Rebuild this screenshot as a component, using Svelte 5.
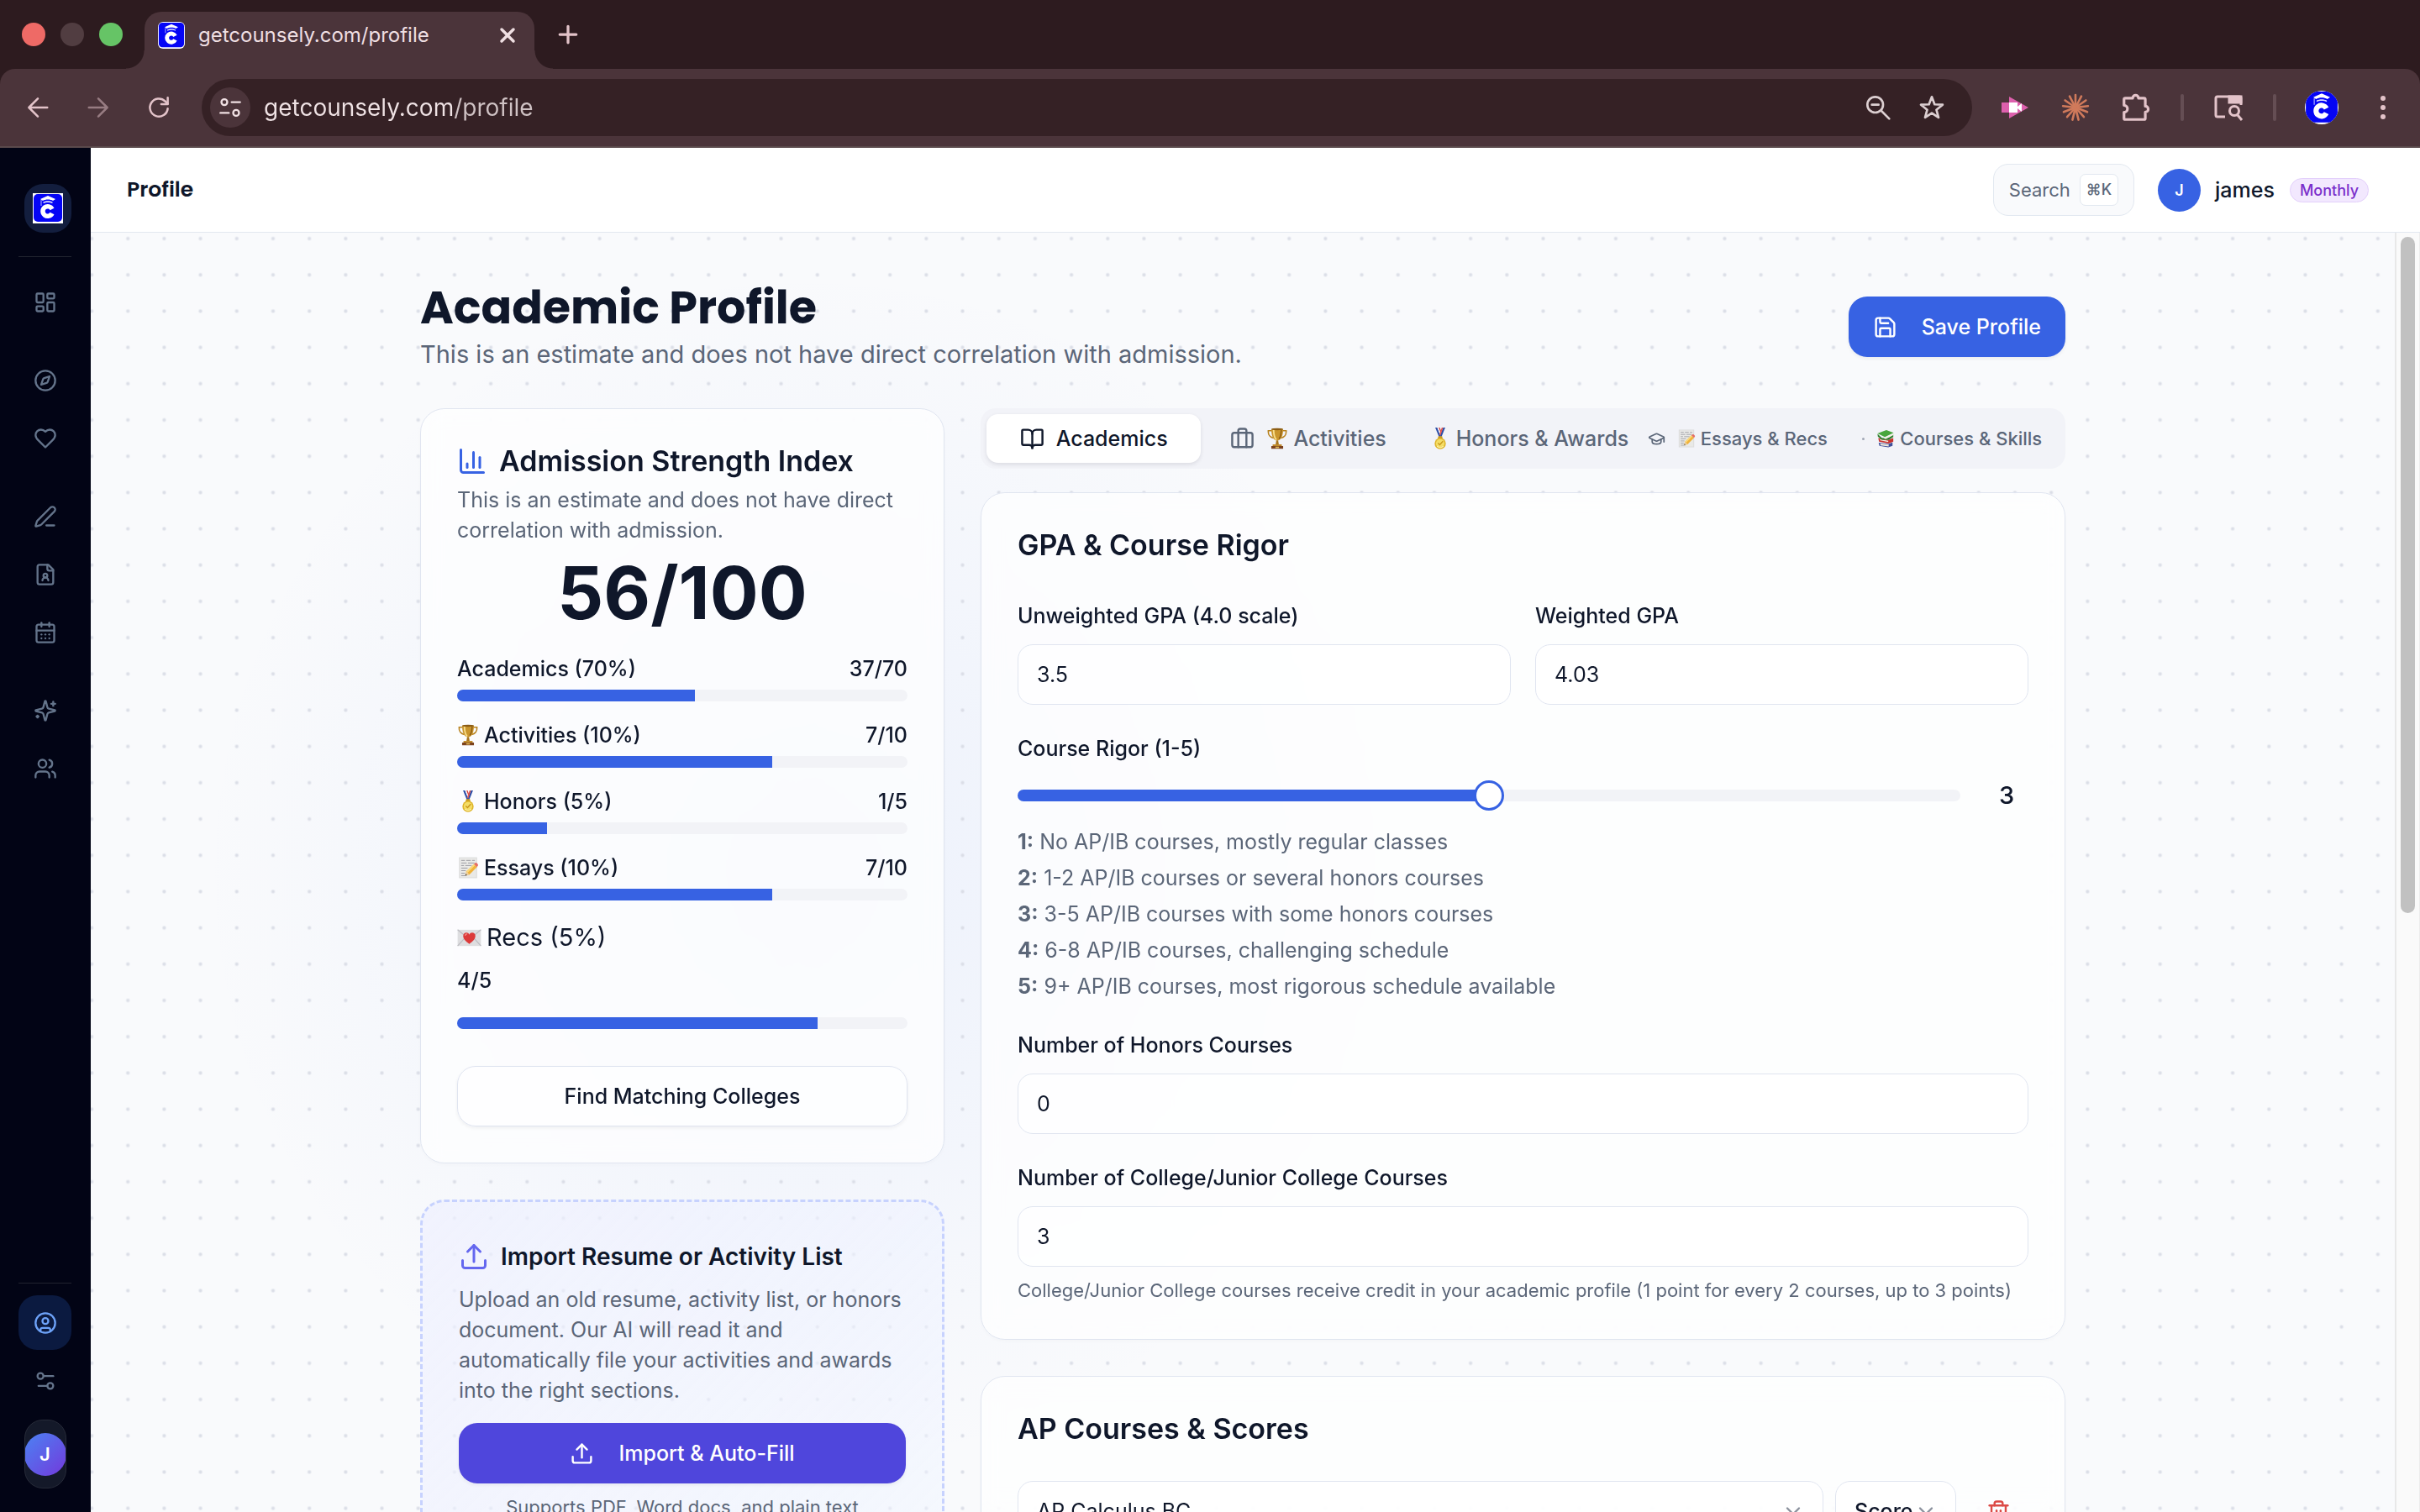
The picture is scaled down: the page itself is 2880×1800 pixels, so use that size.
<script lang="ts">
  let url = $state('getcounsely.com/profile');
  let unweighted = $state('3.5');
  let weighted = $state('4.03');
  let rigor = $state(3);
  let honorsCourses = $state('0');
  let collegeCourses = $state('3');
  let activeTab = $state('academics');

  const rigorFill = $derived(((rigor - 1) / 4) * 100);

  // stroke icons on a 24px grid
  const icons: Record<string, string> = {
    dashboard:
      '<rect width="7" height="9" x="3" y="3" rx="1"/><rect width="7" height="5" x="14" y="3" rx="1"/><rect width="7" height="9" x="14" y="12" rx="1"/><rect width="7" height="5" x="3" y="16" rx="1"/>',
    compass:
      '<circle cx="12" cy="12" r="10"/><path d="m16.24 7.76-1.804 5.411a2 2 0 0 1-1.265 1.265L7.76 16.24l1.804-5.411a2 2 0 0 1 1.265-1.265z"/>',
    heart:
      '<path d="M19 14c1.49-1.46 3-3.21 3-5.5A5.5 5.5 0 0 0 16.5 3c-1.76 0-3 .5-4.5 2-1.5-1.5-2.74-2-4.5-2A5.5 5.5 0 0 0 2 8.5c0 2.3 1.5 4.05 3 5.5l7 7Z"/>',
    pen: '<path d="M13 21h8"/><path d="M21.174 6.812a1 1 0 0 0-3.986-3.987L3.842 16.174a2 2 0 0 0-.5.83l-1.321 4.352a.5.5 0 0 0 .623.622l4.353-1.32a2 2 0 0 0 .83-.497z"/>',
    fileUser:
      '<path d="M14 2v4a2 2 0 0 0 2 2h4"/><path d="M15 18a3 3 0 1 0-6 0"/><path d="M15 2H6a2 2 0 0 0-2 2v16a2 2 0 0 0 2 2h12a2 2 0 0 0 2-2V7z"/><circle cx="12" cy="13" r="2"/>',
    calendar:
      '<path d="M8 2v4"/><path d="M16 2v4"/><rect width="18" height="18" x="3" y="4" rx="2"/><path d="M3 10h18"/><path d="M8 14h.01"/><path d="M12 14h.01"/><path d="M16 14h.01"/><path d="M8 18h.01"/><path d="M12 18h.01"/><path d="M16 18h.01"/>',
    sparkles:
      '<path d="M9.937 15.5A2 2 0 0 0 8.5 14.063l-6.135-1.582a.5.5 0 0 1 0-.962L8.5 9.936A2 2 0 0 0 9.937 8.5l1.582-6.135a.5.5 0 0 1 .963 0L14.063 8.5A2 2 0 0 0 15.5 9.937l6.135 1.581a.5.5 0 0 1 0 .964L15.5 14.063a2 2 0 0 0-1.437 1.437l-1.582 6.135a.5.5 0 0 1-.963 0z"/><path d="M20 3v4"/><path d="M22 5h-4"/><path d="M4 17v2"/><path d="M5 18H3"/>',
    users:
      '<path d="M16 21v-2a4 4 0 0 0-4-4H6a4 4 0 0 0-4 4v2"/><circle cx="9" cy="7" r="4"/><path d="M22 21v-2a4 4 0 0 0-3-3.87"/><path d="M16 3.13a4 4 0 0 1 0 7.75"/>',
    userCircle:
      '<circle cx="12" cy="12" r="10"/><circle cx="12" cy="10" r="3"/><path d="M7 20.662V19a2 2 0 0 1 2-2h6a2 2 0 0 1 2 2v1.662"/>',
    settings:
      '<path d="M20 7h-9"/><path d="M14 17H5"/><circle cx="17" cy="17" r="3"/><circle cx="7" cy="7" r="3"/>',
    chart: '<path d="M3 3v16a2 2 0 0 0 2 2h16"/><path d="M18 17V9"/><path d="M13 17V5"/><path d="M8 17v-3"/>',
    upload: '<path d="M12 3v13"/><path d="m17 8-5-5-5 5"/><path d="M21 15v4a2 2 0 0 1-2 2H5a2 2 0 0 1-2-2v-4"/>',
    save: '<path d="M15.2 3a2 2 0 0 1 1.4.6l3.8 3.8a2 2 0 0 1 .6 1.4V19a2 2 0 0 1-2 2H5a2 2 0 0 1-2-2V5a2 2 0 0 1 2-2z"/><path d="M17 21v-7a1 1 0 0 0-1-1H8a1 1 0 0 0-1 1v7"/><path d="M7 3v4a1 1 0 0 0 1 1h7"/>',
    book: '<path d="M12 7v14"/><path d="M3 18a1 1 0 0 1-1-1V4a1 1 0 0 1 1-1h5a4 4 0 0 1 4 4 4 4 0 0 1 4-4h5a1 1 0 0 1 1 1v13a1 1 0 0 1-1 1h-6a3 3 0 0 0-3 3 3 3 0 0 0-3-3z"/>',
    briefcase:
      '<path d="M16 20V4a2 2 0 0 0-2-2h-4a2 2 0 0 0-2 2v16"/><rect width="20" height="14" x="2" y="6" rx="2"/>',
    cap: '<path d="M21.42 10.922a1 1 0 0 0-.019-1.838L12.83 5.18a2 2 0 0 0-1.66 0L2.6 9.08a1 1 0 0 0 0 1.832l8.57 3.908a2 2 0 0 0 1.66 0z"/><path d="M22 10v6"/><path d="M6 12.5V16a6 3 0 0 0 12 0v-3.5"/>',
    chevron: '<path d="m6 9 6 6 6-6"/>',
    trash:
      '<path d="M3 6h18"/><path d="M19 6v14a2 2 0 0 1-2 2H7a2 2 0 0 1-2-2V6"/><path d="M8 6V4a2 2 0 0 1 2-2h4a2 2 0 0 1 2 2v2"/><path d="M10 11v6"/><path d="M14 11v6"/>',
    close: '<path d="m6 6 12 12M18 6 6 18"/>',
    plus: '<path d="M12 3v18M3 12h18"/>',
    back: '<path d="M21 12H4M12 3.500l-8.500 8.500 8.500 8.500"/>',
    forward: '<path d="M3 12h17M12 3.500l8.500 8.500-8.500 8.500"/>',
    reload: '<path d="M20.500 13a8.500 8.500 0 1 1-2.500-7l2.500 2.500"/><path d="M20.500 2.500v6.200h-6.200"/>',
    tune: '<circle cx="6" cy="6.500" r="3"/><path d="M13.500 6.500H22"/><circle cx="18" cy="17.500" r="3"/><path d="M2 17.500h8.500"/>',
    zoomOut: '<circle cx="9.500" cy="9.500" r="7"/><path d="m15 15 7 7M6.500 9.500h6"/>',
    star: '<path d="m12 2.500 2.500 6.700 7.200.3-5.600 4.500 1.900 6.900-6-4-6 4 1.900-6.900L2.300 9.500l7.200-.3z"/>',
    puzzle:
      '<path d="M4 5h5.500a2.200 2.200 0 0 1 4.400 0H18a1 1 0 0 1 1 1v5a2.200 2.200 0 0 1 0 4.400V20a1 1 0 0 1-1 1H4a1 1 0 0 1-1-1v-4.500a2.600 2.600 0 0 0 0-5.200V6a1 1 0 0 1 1-1z"/>'
  };

  // colour pictograms, also on a 24px grid
  const emoji: Record<string, string> = {
    trophy:
      '<path d="M6 3.500H2.200C1.800 8 4.500 10.800 8 11.500M18 3.500h3.800c.4 4.500-2.300 7.300-5.800 8" fill="none" stroke="#b9831f" stroke-width="1.500"/><path d="M5.500 1.500h13c0 7.500-2 11.200-5 12.500h-3c-3-1.300-5-5-5-12.500z" fill="#c9952d"/><path d="M8 2.500c.2 5.500 1.200 9 3 11" fill="none" stroke="#f8df8c" stroke-width="1.700"/><path d="M16.500 2.500c-.2 5-1 8-2.500 10" fill="none" stroke="#8d5c12" stroke-width="1.400"/><ellipse cx="12" cy="1.800" rx="6.500" ry="1.200" fill="#8a5b14"/><path d="M11 14h2l.8 5h-3.600z" fill="#a8741c"/><path d="M7 18.500h10v2H7z" fill="#c08a2a"/><path d="M5.500 20.300h13v3h-13z" fill="#7b421d"/><path d="M10 21h4v1.500h-4z" fill="#e3bd58"/>',
    medal:
      '<path d="M6.500 0h2.300l4 10h-2.300z" fill="#2d4fa8"/><path d="M8.800 0h1.600l3.200 8-1 2z" fill="#fff"/><path d="M10.200 0h1.300l2 5-.7 2z" fill="#d23a3a"/><path d="M17.500 0h-2.300l-4 10h2.300z" fill="#2d4fa8"/><path d="M15.200 0h-1.500l-2.400 7 .7 2.500z" fill="#e2554f"/><path d="M10 9.500h4l.8 3H9.200z" fill="#c99a1b"/><circle cx="12" cy="17.500" r="6.200" fill="#dfb52c"/><circle cx="12" cy="17.500" r="4.700" fill="#f4dd66"/><path d="m9.500 17 2 2 3.500-4" fill="none" stroke="#c9971d" stroke-width="1.300"/><path d="M8.500 20.500c2 2 5 2 7 0" fill="none" stroke="#fdf4b0" stroke-width="1"/>',
    memo: '<path d="M2 .5h20v23H2z" fill="#dcdcdc"/><path d="M3 1.500h18v21H3z" fill="#e9e9e7"/><path d="M4.500 4h4M10 4h5M16.500 4h3M4.500 6.800h6M12 6.800h7M4.500 9.600h3M9 9.600h7M4.500 12.400h7M4.500 15.200h5M4.500 18h4M4.500 20.700h6" stroke="#9a9aa0" stroke-width=".9" fill="none"/><path d="m9 20.500 1.200-4.500L18.500 8l3.300 3.200-8.300 8.300z" fill="#f0b33b"/><path d="m10.200 16 8.300-8 1.300 1.300-8.300 8.200z" fill="#fbd979"/><path d="m18.500 8 1.400-1.300c1-.8 3.800 1.700 3 2.900l-1.100 1.600z" fill="#e56d66"/><path d="m9 20.500 1.200-4.500 3.300 3.500z" fill="#eccfa0"/><path d="m9 20.500.5-1.800 1.300 1.200z" fill="#333"/>',
    letter:
      '<path d="M.5 4h23v16H.5z" fill="#dedee0"/><path d="M.5 4 12 13.500 23.500 4M.5 20 8.500 11M23.500 20l-8-9" fill="none" stroke="#bdbdc2" stroke-width="1"/><path d="M12 18c-3.500-2.500-6-4.800-6-7.800 0-3.700 4.700-4.500 6-1.400 1.300-3.100 6-2.300 6 1.400 0 3-2.500 5.300-6 7.800z" fill="#dc3a3a"/><path d="M8 10c0-1.300 1-2 2-1.800" fill="none" stroke="#f48b85" stroke-width="1.200"/>',
    books:
      '<path d="m3 17.500 13 1.500 5-2v4.500l-5.500 2L4 21.500z" fill="#3f4f9b"/><path d="m5 18.500 11 1.300v2.500L5.500 21z" fill="#efe9dc"/><path d="m2.500 11.500 13 2.500 6.500-2.500v4.500L16 18.500 3.500 16z" fill="#c8322f"/><path d="m4.500 12.900 11 2v1.600l-10.500-2z" fill="#f2ece0"/><path d="m1.500 6 6 5.500 8.500-.5 6-4.500v3.500L16 14l-9-.5-5-4z" fill="#2f7f2f"/><path d="M1.500 5.500 13 1l9.500 3.500L11 10z" fill="#49a63d"/><path d="m9 11.500 3-1 10.500-4.800v1.600L12 12.800z" fill="#f3eee2"/>'
  };

  const navGroups = [
    [{ icon: 'dashboard', label: 'Dashboard' }],
    [
      { icon: 'compass', label: 'Explore' },
      { icon: 'heart', label: 'Saved' }
    ],
    [
      { icon: 'pen', label: 'Write' },
      { icon: 'fileUser', label: 'Resume' },
      { icon: 'calendar', label: 'Calendar' }
    ],
    [
      { icon: 'sparkles', label: 'Assistant' },
      { icon: 'users', label: 'Community' }
    ]
  ];

  const scores = [
    { label: 'Academics (70%)', emoji: '', value: 37, max: 70 },
    { label: 'Activities (10%)', emoji: 'trophy', value: 7, max: 10 },
    { label: 'Honors (5%)', emoji: 'medal', value: 1, max: 5 },
    { label: 'Essays (10%)', emoji: 'memo', value: 7, max: 10 }
  ];

  const tabs = [
    { id: 'academics', label: 'Academics', icon: 'book', emoji: '', size: '' },
    { id: 'activities', label: 'Activities', icon: 'briefcase', emoji: 'trophy', size: '' },
    { id: 'honors', label: 'Honors & Awards', icon: '', emoji: 'medal', size: '' },
    { id: 'essays', label: 'Essays & Recs', icon: 'cap', emoji: 'memo', size: 'small' },
    { id: 'courses', label: 'Courses & Skills', icon: 'dot', emoji: 'books', size: 'small' }
  ];

  const rigorLevels = [
    'No AP/IB courses, mostly regular classes',
    '1-2 AP/IB courses or several honors courses',
    '3-5 AP/IB courses with some honors courses',
    '6-8 AP/IB courses, challenging schedule',
    '9+ AP/IB courses, most rigorous schedule available'
  ];

  const rays = Array.from({ length: 13 }, (_, i) => (i * 360) / 13);
</script>

{#snippet icon(name: string, size = 29, weight = 2)}
  <svg
    class="icon"
    width={size}
    height={size}
    viewBox="0 0 24 24"
    fill="none"
    stroke="currentColor"
    stroke-width={weight}
    stroke-linecap="round"
    stroke-linejoin="round"
    aria-hidden="true"
  >
    {@html icons[name]}
  </svg>
{/snippet}

{#snippet pic(name: string, size = 26)}
  <svg class="icon" width={size} height={size} viewBox="0 0 24 24" aria-hidden="true">
    {@html emoji[name]}
  </svg>
{/snippet}

{#snippet logo(size: number)}
  <svg class="icon" width={size} height={size} viewBox="0 0 36 36" aria-hidden="true">
    <rect width="36" height="36" fill="#fff" />
    <rect x="1" y="1" width="34" height="33" rx="5" fill="#0505f5" />
    <path d="M18 3 27 7l-3 2c-3-2-9-2-12 0L9 7z" fill="#fff" />
    <path d="M12.500 10.500c3-1.800 8-1.800 11 0v1.500c-3-1.500-8-1.500-11 0z" fill="#dcdcff" />
    <path d="M10 8v7" stroke="#b9b9ff" stroke-width="1" />
    <path d="M23 19a5.800 5.800 0 1 0 0 5" fill="none" stroke="#fff" stroke-width="5.500" />
  </svg>
{/snippet}

<div class="window">
  <div class="tabstrip">
    <div class="lights">
      <span class="light red"></span>
      <span class="light grey"></span>
      <span class="light green"></span>
    </div>
    <div class="browser-tab">
      <span class="favicon">{@render logo(32)}</span>
      <span class="tab-title">getcounsely.com/profile</span>
      <button class="plain" aria-label="Close tab">{@render icon('close', 28, 3)}</button>
    </div>
    <button class="plain new-tab" aria-label="New tab">{@render icon('plus', 26, 3)}</button>
  </div>

  <div class="toolbar">
    <div class="nav-buttons">
      <button class="plain" aria-label="Back">{@render icon('back', 30)}</button>
      <button class="plain dim" aria-label="Forward" disabled>{@render icon('forward', 30)}</button>
      <button class="plain" aria-label="Reload">{@render icon('reload', 30)}</button>
    </div>
    <div class="omnibox">
      <button class="plain site-info" aria-label="Site information">{@render icon('tune', 28)}</button>
      <input class="url" type="text" aria-label="Address" bind:value={url} />
      <button class="plain" aria-label="Zoom">{@render icon('zoomOut', 32)}</button>
      <button class="plain" aria-label="Bookmark">{@render icon('star', 32)}</button>
    </div>
    <div class="extensions">
      <button class="plain" aria-label="Recorder">
        <svg class="icon" width="32" height="32" viewBox="0 0 32 32">
          <path d="M0 10h9V3l23 13L9 29v-7H0z" fill="#dd60ad" />
          <path d="M9 10h10v12H9z" fill="#fff" />
          <path d="m19 15 5-4v10l-5-4z" fill="#fff" />
        </svg>
      </button>
      <button class="plain" aria-label="Assistant">
        <svg class="icon" width="34" height="34" viewBox="-17 -17 34 34">
          {#each rays as angle}
            <path d="M0 0V-15" transform="rotate({angle})" stroke="#d07a5b" stroke-width="2.600" stroke-linecap="round" />
          {/each}
        </svg>
      </button>
      <button class="plain" aria-label="Extensions">{@render icon('puzzle', 38)}</button>
      <span class="bar-divider"></span>
      <button class="plain" aria-label="Tab search">
        <svg class="icon" width="36" height="36" viewBox="0 0 36 36" fill="none" stroke="#e3c3c9" stroke-width="3">
          <path d="M14 29H5a2 2 0 0 1-2-2V7a2 2 0 0 1 2-2h26a2 2 0 0 1 2 2v8" />
          <path d="M19 5h14v7H19z" fill="#e3c3c9" />
          <circle cx="25" cy="22" r="5.500" />
          <path d="m29 27 5 6" />
        </svg>
      </button>
      <span class="bar-divider"></span>
      <button class="plain avatar" aria-label="Browser profile">{@render logo(40)}</button>
      <button class="plain" aria-label="Menu">
        <svg class="icon" width="32" height="32" viewBox="0 0 32 32" fill="#e3c3c9">
          <circle cx="16" cy="5" r="3" /><circle cx="16" cy="16" r="3" /><circle cx="16" cy="27" r="3" />
        </svg>
      </button>
    </div>
  </div>

  <div class="app">
    <aside class="sidebar">
      <a class="brand" href="/" aria-label="Counsely">{@render logo(36)}</a>
      <nav class="nav" aria-label="Main">
        {#each navGroups as group}
          <div class="nav-group">
            {#each group as item}
              <a class="nav-item" href="/{item.label.toLowerCase()}" aria-label={item.label}>
                {@render icon(item.icon, 28)}
              </a>
            {/each}
          </div>
        {/each}
      </nav>
      <div class="nav-footer">
        <a class="nav-item active" href="/profile" aria-label="Profile">{@render icon('userCircle', 28)}</a>
        <a class="nav-item" href="/settings" aria-label="Settings">{@render icon('settings', 28)}</a>
        <button class="account" aria-label="Account"><span>J</span></button>
      </div>
    </aside>

    <div class="main">
      <header class="topbar">
        <span class="page-name">Profile</span>
        <button class="search">Search <kbd>⌘K</kbd></button>
        <span class="initial">J</span>
        <span class="user">james</span>
        <span class="plan">Monthly</span>
      </header>

      <div class="viewport">
        <div class="scroll">
          <div class="content">
            <div class="heading">
              <div>
                <h1>Academic Profile</h1>
                <p>This is an estimate and does not have direct correlation with admission.</p>
              </div>
              <button class="btn primary">{@render icon('save')} Save Profile</button>
            </div>

            <div class="columns">
              <div class="column">
                <section class="card">
                  <h2 class="with-icon index">{@render icon('chart', 36)} Admission Strength Index</h2>
                  <p class="desc">This is an estimate and does not have direct correlation with admission.</p>
                  <div class="total">56/100</div>
                  <div class="scores">
                    {#each scores as s}
                      <div class="score">
                        <div class="score-line">
                          <span class="score-label">
                            {#if s.emoji}{@render pic(s.emoji)}{/if}
                            {s.label}
                          </span>
                          <span>{s.value}/{s.max}</span>
                        </div>
                        <div class="track"><div class="fill" style="width: {(s.value / s.max) * 100}%"></div></div>
                      </div>
                    {/each}
                    <div class="recs">
                      <span class="recs-label">{@render pic('letter', 29)} Recs (5%)</span>
                      <span class="recs-value">4/5</span>
                    </div>
                    <div class="track"><div class="fill" style="width: 80%"></div></div>
                  </div>
                  <button class="btn outline">Find Matching Colleges</button>
                </section>

                <section class="card import">
                  <h2 class="with-icon">{@render icon('upload', 36)} Import Resume or Activity List</h2>
                  <p class="desc">
                    Upload an old resume, activity list, or honors document. Our AI will read it and automatically file
                    your activities and awards into the right sections.
                  </p>
                  <button class="btn indigo">{@render icon('upload')} Import &amp; Auto-Fill</button>
                  <p class="hint center">Supports PDF, Word docs, and plain text</p>
                </section>
              </div>

              <div class="column">
                <div class="tabs" role="tablist">
                  {#each tabs as tab}
                    <button
                      class="tab {tab.size}"
                      class:selected={activeTab === tab.id}
                      role="tab"
                      aria-selected={activeTab === tab.id}
                      onclick={() => (activeTab = tab.id)}
                    >
                      {#if tab.icon === 'dot'}
                        <span class="dot"></span>
                      {:else if tab.icon}
                        {@render icon(tab.icon, tab.size ? 21 : 29)}
                      {:else}
                        <span></span>
                      {/if}
                      <span class="tab-label">
                        {#if tab.emoji}{@render pic(tab.emoji, tab.size ? 22 : 26)}{/if}
                        {tab.label}
                      </span>
                    </button>
                  {/each}
                </div>

                <section class="card">
                  <h2>GPA &amp; Course Rigor</h2>
                  <div class="fields">
                    <div class="pair">
                      <div class="field">
                        <label for="unweighted">Unweighted GPA (4.0 scale)</label>
                        <input id="unweighted" class="box" type="text" bind:value={unweighted} />
                      </div>
                      <div class="field">
                        <label for="weighted">Weighted GPA</label>
                        <input id="weighted" class="box" type="text" bind:value={weighted} />
                      </div>
                    </div>
                    <div class="field">
                      <label for="rigor">Course Rigor (1-5)</label>
                      <div class="slider-row">
                        <input
                          id="rigor"
                          class="slider"
                          type="range"
                          min="1"
                          max="5"
                          bind:value={rigor}
                          style="--fill: {rigorFill}%"
                        />
                        <span class="slider-value">{rigor}</span>
                      </div>
                      <div class="levels">
                        {#each rigorLevels as level, i}
                          <div><strong>{i + 1}:</strong> {level}</div>
                        {/each}
                      </div>
                    </div>
                    <div class="field">
                      <label for="honors">Number of Honors Courses</label>
                      <input id="honors" class="box" type="text" bind:value={honorsCourses} />
                    </div>
                    <div class="field">
                      <label for="college">Number of College/Junior College Courses</label>
                      <input id="college" class="box" type="text" bind:value={collegeCourses} />
                      <p class="hint">
                        College/Junior College courses receive credit in your academic profile (1 point for every 2
                        courses, up to 3 points)
                      </p>
                    </div>
                  </div>
                </section>

                <section class="card">
                  <h2>AP Courses &amp; Scores</h2>
                  <div class="ap-row">
                    <div class="select course">
                      <select class="box" aria-label="AP course">
                        <option>AP Calculus BC</option>
                      </select>
                      {@render icon('chevron', 28)}
                    </div>
                    <div class="select">
                      <select class="box score-select" aria-label="Score">
                        <option>Score</option>
                      </select>
                      {@render icon('chevron', 28)}
                    </div>
                    <button class="plain remove" aria-label="Remove course">{@render icon('trash')}</button>
                  </div>
                </section>
              </div>
            </div>
          </div>
        </div>
        <div class="scrollbar"><div class="thumb"></div></div>
      </div>
    </div>
  </div>
</div>

<style>
  :global(body) {
    margin: 0;
  }

  .window {
    display: flex;
    flex-direction: column;
    height: 100vh;
    overflow: hidden;
    background: #2d1b1f;
    color: #0f172a;
    font-family: Inter, 'Liberation Sans', sans-serif;
    font-size: 25px;
    line-height: 36px;
  }

  .window *,
  .window *::before,
  .window *::after {
    box-sizing: border-box;
  }

  h1,
  h2,
  p {
    margin: 0;
  }

  button,
  input,
  select {
    font: inherit;
    color: inherit;
  }

  .icon {
    display: block;
    flex-shrink: 0;
  }

  .plain {
    display: flex;
    align-items: center;
    justify-content: center;
    padding: 0;
    border: 0;
    background: none;
  }

  /* browser chrome */
  .tabstrip {
    display: flex;
    align-items: center;
    height: 82px;
    flex-shrink: 0;
  }

  .lights {
    display: flex;
    gap: 18px;
    padding: 0 26px;
  }

  .light {
    width: 28px;
    height: 28px;
    border-radius: 50%;
  }

  .red {
    background: #ee6a66;
  }

  .grey {
    background: #513d41;
  }

  .green {
    background: #66c466;
  }

  .browser-tab {
    position: relative;
    display: flex;
    align-items: center;
    align-self: flex-end;
    width: 464px;
    height: 68px;
    padding: 0 18px 12px 16px;
    gap: 16px;
    border-radius: 20px 20px 0 0;
    background: #4b343a;
    color: #efdfe2;
  }

  .browser-tab::before,
  .browser-tab::after {
    content: '';
    position: absolute;
    bottom: 0;
    width: 22px;
    height: 22px;
  }

  .browser-tab::before {
    right: 100%;
    background: radial-gradient(circle at 0 0, transparent 21px, #4b343a 22px);
  }

  .browser-tab::after {
    left: 100%;
    background: radial-gradient(circle at 100% 0, transparent 21px, #4b343a 22px);
  }

  .favicon {
    border-radius: 6px;
    overflow: hidden;
  }

  .tab-title {
    flex: 1;
    font-size: 24px;
  }

  .new-tab {
    margin-left: 27px;
    color: #e3c3c9;
  }

  .toolbar {
    display: flex;
    align-items: center;
    height: 94px;
    flex-shrink: 0;
    padding: 0 25px 0 30px;
    border-bottom: 2px solid #5a4a4c;
    border-radius: 18px 18px 0 0;
    background: #4b343a;
    color: #e3c3c9;
  }

  .nav-buttons {
    display: flex;
    gap: 42px;
    margin-right: 36px;
  }

  .dim {
    opacity: 0.5;
  }

  .omnibox {
    flex: 1;
    display: flex;
    align-items: center;
    gap: 32px;
    height: 68px;
    padding: 0 32px 0 10px;
    border-radius: 34px;
    background: #352125;
    color: #dccfd1;
  }

  .site-info {
    width: 48px;
    height: 48px;
    border-radius: 50%;
    background: #4b343a;
    color: #efdfe2;
  }

  .url {
    flex: 1;
    padding: 0;
    margin-left: -16px;
    border: 0;
    outline: 0;
    font-size: 28px;
    background: linear-gradient(to right, #efe2e4 226px, #cfc2c4 226px);
    background-clip: text;
    color: transparent;
  }

  .extensions {
    display: flex;
    align-items: center;
    gap: 34px;
    margin-left: 32px;
  }

  .extensions .plain {
    min-width: 38px;
  }

  .bar-divider {
    width: 4px;
    height: 32px;
    border-radius: 2px;
    background: #654e54;
  }

  .avatar {
    border-radius: 50%;
    overflow: hidden;
  }

  /* app shell */
  .app {
    flex: 1;
    display: flex;
    min-height: 0;
  }

  .sidebar {
    display: flex;
    flex-direction: column;
    width: 108px;
    flex-shrink: 0;
    padding: 43px 23px 28px 22px;
    background: #020415;
  }

  .brand {
    display: flex;
    align-items: center;
    justify-content: center;
    align-self: flex-end;
    width: 56px;
    height: 58px;
    border-radius: 22px;
    background: #131e3e;
  }

  .nav {
    flex: 1;
    display: flex;
    flex-direction: column;
    gap: 28px;
    margin-top: 28px;
    padding-top: 21px;
    border-top: 1px solid #20232f;
  }

  .nav-group,
  .nav-footer {
    display: flex;
    flex-direction: column;
    gap: 4px;
  }

  .nav-item {
    display: flex;
    align-items: center;
    justify-content: center;
    height: 65px;
    border-radius: 22px;
    color: #64748b;
  }

  .nav-item.active {
    background: #0b1a40;
    color: #6da2f8;
  }

  .nav-footer {
    padding-top: 14px;
    border-top: 1px solid #20232f;
  }

  .account {
    align-self: center;
    display: flex;
    align-items: center;
    justify-content: center;
    width: 50px;
    height: 82px;
    margin-top: 10px;
    padding: 0;
    border: 1px solid #272b39;
    border-radius: 22px;
    overflow: hidden;
    background: #141929;
  }

  .account span {
    flex-shrink: 0;
    width: 50px;
    height: 51px;
    border-radius: 50%;
    background: linear-gradient(135deg, #4b83f3, #7339dc);
    color: #fff;
    font-size: 22px;
    font-weight: 600;
    line-height: 51px;
    text-align: center;
  }

  .main {
    flex: 1;
    display: flex;
    flex-direction: column;
    min-width: 0;
  }

  .topbar {
    display: flex;
    align-items: center;
    height: 101px;
    flex-shrink: 0;
    padding: 0 61px 0 43px;
    border-bottom: 1px solid #e2e8f0;
    background: #fff;
  }

  .page-name {
    flex: 1;
    font-family: Poppins, Inter, sans-serif;
    font-weight: 600;
  }

  .search {
    display: flex;
    align-items: center;
    gap: 11px;
    height: 62px;
    padding: 0 18px;
    border: 1px solid #e2e8f0;
    border-radius: 18px;
    background: #f9fafc;
    color: #5b6678;
    font-size: 22px;
  }

  kbd {
    height: 38px;
    padding: 0 7px;
    border: 1px solid #e2e8f0;
    border-radius: 7px;
    background: #fff;
    font-family: Inter, 'Noto Sans', 'DejaVu Sans', sans-serif;
    font-size: 18px;
    font-weight: 500;
    line-height: 36px;
  }

  .initial {
    width: 51px;
    height: 51px;
    margin: 0 17px 0 28px;
    border-radius: 50%;
    background: #3762e3;
    color: #fff;
    font-size: 18px;
    font-weight: 600;
    line-height: 51px;
    text-align: center;
  }

  .user {
    font-weight: 500;
  }

  .plan {
    height: 29px;
    margin-left: 18px;
    padding: 0 11px;
    border: 1px solid #e3d0fb;
    border-radius: 15px;
    background: #f2e8fe;
    color: #7a2fcb;
    font-size: 18px;
    font-weight: 500;
    line-height: 27px;
  }

  .viewport {
    flex: 1;
    display: flex;
    min-height: 0;
  }

  .scroll {
    flex: 1;
    overflow: hidden;
    background:
      radial-gradient(circle at 21px 21px, #dbdee7 1px, transparent 3px) -20px -14px / calc(216px / 5) calc(216px / 5),
      radial-gradient(circle 720px at 31% 50%, rgba(92, 140, 250, 0.08), transparent) 0 0 / 100% 100%,
      #f9fafc;
  }

  .scrollbar {
    width: 30px;
    flex-shrink: 0;
    padding: 5px 5px 0 5px;
    border-left: 2px solid #e8e8e8;
    border-right: 1px solid #ededed;
    background: #fafafa;
  }

  .thumb {
    width: 17px;
    height: 53%;
    border-radius: 9px;
    background: #c1c1c1;
  }

  /* page */
  .content {
    max-width: 2074px;
    margin: 0 auto;
    padding: 58px;
  }

  .heading {
    display: flex;
    align-items: center;
    justify-content: space-between;
    margin-bottom: 43px;
  }

  h1 {
    margin-bottom: 2px;
    font-family: Poppins, Inter, sans-serif;
    font-size: 54px;
    font-weight: 700;
    line-height: 63px;
  }

  .heading p {
    color: #5b6678;
    font-size: 29px;
    line-height: 43px;
  }

  .btn {
    display: flex;
    align-items: center;
    justify-content: center;
    gap: 29px;
    height: 72px;
    padding: 0 29px;
    border: 0;
    border-radius: 22px;
    color: #fff;
    font-weight: 500;
    box-shadow: 0 2px 4px rgba(15, 23, 42, 0.06);
  }

  .btn.primary {
    background: #3762e3;
  }

  .btn.indigo {
    width: 100%;
    background: #4f46dc;
  }

  .btn.outline {
    width: 100%;
    border: 1px solid #dfe4f0;
    background: rgba(255, 255, 255, 0.5);
    color: #0f172a;
  }

  .columns {
    display: grid;
    grid-template-columns: 624px 1fr;
    gap: 43px;
    align-items: start;
  }

  .column {
    display: flex;
    flex-direction: column;
    gap: 43px;
    min-width: 0;
  }

  .card {
    padding: 43px;
    border: 1px solid #e0e5f0;
    border-radius: 29px;
    background: rgba(255, 255, 255, 0.7);
    backdrop-filter: blur(12px);
    box-shadow: 0 2px 4px rgba(15, 23, 42, 0.02);
  }

  h2 {
    font-size: 34px;
    font-weight: 600;
    line-height: 38px;
  }

  .with-icon {
    display: flex;
    align-items: center;
    gap: 14px;
  }

  .index .icon {
    color: #3762e3;
  }

  .desc {
    color: #5b6678;
  }

  .index + .desc {
    margin-top: 9px;
  }

  .total {
    margin: 14px 0 29px;
    font-size: 86px;
    font-weight: 700;
    line-height: 86px;
    text-align: center;
  }

  .scores {
    display: flex;
    flex-direction: column;
    gap: 22px;
    margin-bottom: 44px;
    font-weight: 500;
  }

  .score-line {
    display: flex;
    justify-content: space-between;
    margin-bottom: 7px;
  }

  .score-label,
  .recs-label,
  .tab-label {
    display: flex;
    align-items: center;
    gap: 6px;
  }

  .recs {
    display: flex;
    flex-direction: column;
    gap: 7px;
    line-height: 44px;
  }

  .recs-label {
    font-size: 29px;
    font-weight: 400;
  }

  .track {
    height: 14px;
    border-radius: 7px;
    overflow: hidden;
    background: #f2f3f7;
  }

  .fill {
    height: 100%;
    background: #3762e3;
  }

  .card.import {
    border: 3px dashed #c7d2fe;
    background: linear-gradient(135deg, rgba(238, 240, 255, 0.7), rgba(240, 245, 255, 0.5));
    backdrop-filter: none;
    box-shadow: none;
  }

  .import h2 {
    margin: 3px 0 14px;
    font-size: 28px;
  }

  .import h2 .icon {
    color: #6467ef;
  }

  .import .btn {
    margin-top: 21px;
  }

  .hint {
    margin-top: 14px;
    color: #5b6678;
    font-size: 22px;
    line-height: 29px;
  }

  .center {
    text-align: center;
  }

  .tabs {
    display: grid;
    grid-template-columns: repeat(5, 1fr);
    height: 72px;
    margin-bottom: -15px;
    padding: 7px;
    border-radius: 18px;
    background: #f2f3f8;
    color: #5b6678;
  }

  .tab {
    display: flex;
    align-items: center;
    justify-content: center;
    gap: 14px;
    min-width: 0;
    padding: 0;
    border: 0;
    border-radius: 14px;
    background: none;
    font-weight: 500;
    white-space: nowrap;
  }

  .tab.selected {
    background: #fff;
    color: #0f172a;
    box-shadow: 0 2px 5px rgba(15, 23, 42, 0.1);
  }

  .tab.small {
    font-size: 22px;
  }

  .dot {
    width: 3px;
    height: 3px;
    border-radius: 50%;
    background: #a0a7b5;
  }

  .fields {
    display: flex;
    flex-direction: column;
    gap: 39px;
    margin-top: 52px;
  }

  .pair {
    display: grid;
    grid-template-columns: 1fr 1fr;
    gap: 29px;
  }

  .field {
    display: flex;
    flex-direction: column;
  }

  label {
    margin-bottom: 21px;
    font-weight: 500;
    line-height: 26px;
  }

  .box {
    width: 100%;
    height: 72px;
    padding: 0 22px;
    border: 1px solid #e0e5f0;
    border-radius: 18px;
    outline: 0;
    background: rgba(255, 255, 255, 0.6);
  }

  .slider-row {
    display: flex;
    align-items: center;
    gap: 29px;
    height: 43px;
  }

  .slider {
    flex: 1;
    height: 14px;
    margin: 0;
    border-radius: 7px;
    appearance: none;
    background: linear-gradient(to right, #3762e3 var(--fill), #f2f3f7 var(--fill));
  }

  .slider::-webkit-slider-thumb {
    appearance: none;
    width: 36px;
    height: 36px;
    border: 3px solid #3762e3;
    border-radius: 50%;
    background: #fff;
  }

  .slider-value {
    width: 52px;
    font-size: 29px;
    font-weight: 500;
    text-align: center;
  }

  .levels {
    display: flex;
    flex-direction: column;
    gap: 7px;
    margin-top: 16px;
    color: #5b6678;
  }

  strong {
    font-weight: 700;
  }

  .ap-row {
    display: flex;
    align-items: center;
    gap: 14px;
    margin-top: 43px;
  }

  .select {
    position: relative;
  }

  .select .icon {
    position: absolute;
    top: 22px;
    right: 22px;
    color: #8a909c;
    pointer-events: none;
  }

  .course {
    flex: 1;
  }

  select.box {
    appearance: none;
  }

  .score-select.box {
    width: 144px;
    font-weight: 500;
  }

  .remove {
    width: 72px;
    height: 72px;
    color: #dc4b46;
  }
</style>
